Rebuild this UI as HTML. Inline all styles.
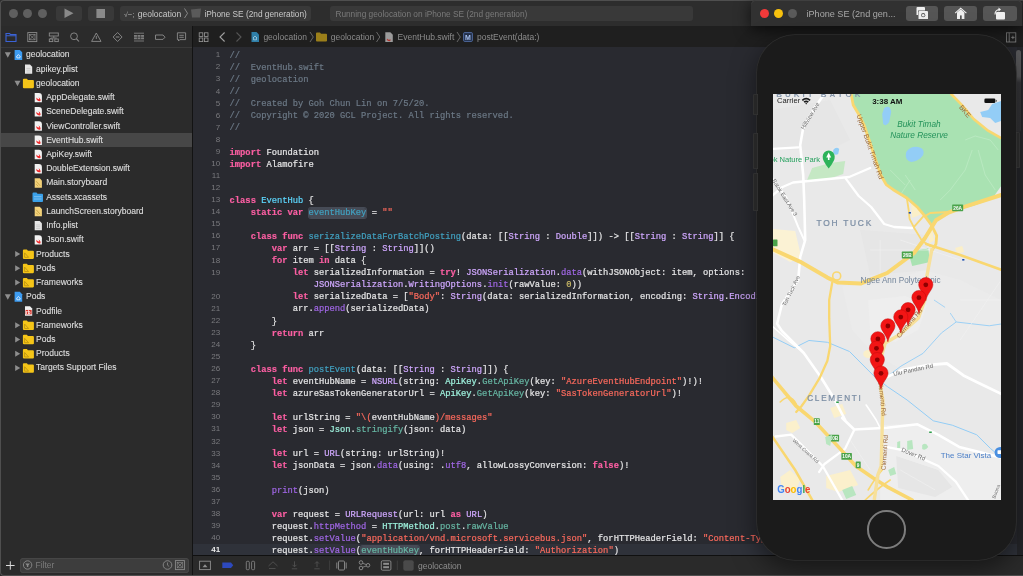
<!DOCTYPE html><html><head><meta charset="utf-8"><style>
*{box-sizing:border-box;margin:0;padding:0}
html,body{width:1023px;height:576px;overflow:hidden;background:#292a30;font-family:"Liberation Sans",sans-serif;position:relative}
.a{position:absolute}
svg{position:absolute;overflow:visible}
#toolbar{left:0;top:0;width:1023px;height:26.8px;background:#2d2d2d;border-bottom:1px solid #0b0b0b}
.tl{position:absolute;top:8.9px;width:9.2px;height:9.2px;border-radius:50%;background:#5f5f5f}
.tbtn{position:absolute;top:5.5px;height:15.5px;background:#393939;border-radius:3px}
#nav{left:0;top:26px;width:192px;height:550px;background:#2b2b2b}
#navtabs{left:0;top:26px;width:192px;height:21.5px;border-bottom:1px solid #3a3a3a}
#sep{left:192px;top:26px;width:1.5px;height:550px;background:#131313}
#jump{left:193px;top:26px;width:830px;height:21px;background:#1f1f1f}
#code{left:193px;top:47px;width:830px;height:508.5px;background:#292a30;overflow:hidden}
#debug{left:193px;top:555.2px;width:830px;height:20.8px;background:#2a2a2a;border-top:1.3px solid #101010}
.row{position:absolute;left:0;width:192px;height:14.2px;font-size:8.5px;color:#dedede;white-space:nowrap}
.row.sel{background:#474747}
.row .t{position:absolute;top:-0.4px;line-height:14.2px;-webkit-text-stroke:0.12px currentColor}
.ln{position:absolute;left:0;margin-top:-0.7px;width:27.1px;text-align:right;font-family:"Liberation Sans",sans-serif;font-size:8px;line-height:12.07px;color:#7a7a7e}
.cl{position:absolute;left:36.6px;font-family:"Liberation Mono",monospace;font-size:8.77px;line-height:12.07px;color:#e6e6e7;white-space:pre;-webkit-text-stroke:0.2px currentColor}
.c{color:#6c7986}.k{color:#fc5fa3;font-weight:bold}.s{color:#fc6a5d}.n{color:#d0bf69}
.td{color:#5dd8ff}.od{color:#41a1c0}.pt{color:#9ef1dd}.pf{color:#67b7a4}.ot{color:#d0a8ff}.of{color:#a167e6}
.hl{background:#464b56;border-radius:2px;box-shadow:0 0 0 1px #464b56}
.jt{position:absolute;top:26.8px;line-height:21px;font-size:8.5px;color:#8c8c8c;white-space:nowrap}
</style></head><body>
<div id="root" style="position:absolute;left:0;top:0;width:1023px;height:576px;overflow:hidden;will-change:transform;background:#292a30">
<div id="toolbar" class="a">
<div class="tl" style="left:9px"></div>
<div class="tl" style="left:23px"></div>
<div class="tl" style="left:37.5px"></div>
<div class="tbtn" style="left:55.5px;width:26px"></div>
<div class="tbtn" style="left:87.5px;width:26px"></div>
<div class="tbtn" style="left:119.5px;width:191.5px"></div>
<div class="tbtn" style="left:330px;width:363px"></div>
</div>
<svg style="left:0;top:0" width="1" height="1"><path d="M64.5 8.5 L73.5 13.3 L64.5 18 Z" fill="#8a8a8a"/><rect x="96.4" y="9" width="8.6" height="9" fill="#8a8a8a"/></svg>
<div class="a" style="left:124px;top:0.9px;line-height:26px;font-size:8.5px;color:#a8a8a8;white-space:nowrap"><span style="font-size:7px">√</span><span style="font-size:8px">−;</span></div>
<div class="a" style="left:137.8px;top:0.9px;line-height:26px;font-size:8.5px;color:#c9c9c9;white-space:nowrap">geolocation</div>
<svg style="left:0;top:0" width="1" height="1"><path d="M184.5 8.5 L187.5 13.3 L184.5 18" stroke="#9a9a9a" stroke-width="0.8" fill="none"/><path d="M191 9.5 L201 8.5 L200 17.5 L192 17.5 Z" fill="#5a5a5a"/></svg>
<div class="a" style="left:204.4px;top:0.9px;line-height:26px;font-size:8.3px;color:#c9c9c9;white-space:nowrap">iPhone SE (2nd generation)</div>
<div class="a" style="left:335.4px;top:0.9px;line-height:26px;font-size:8.3px;color:#7a7a7a;white-space:nowrap">Running geolocation on iPhone SE (2nd generation)</div>
<div id="nav" class="a"></div><div id="navtabs" class="a"></div><div id="sep" class="a"></div>
<svg style="left:0;top:0" width="1" height="1" fill="none" stroke-width="0.9"><path d="M6 33.5 H9.5 L10.5 34.5 H16 V41.5 H6 Z M6 35.8 H16" stroke="#3b63d6" stroke-width="1.1"/><rect x="27.8" y="32.6" width="9" height="9" stroke="#8c8c8c"/><rect x="29.6" y="34.4" width="5.4" height="5.4" stroke="#8c8c8c" stroke-width="0.7"/><path d="M29.6 34.4 L35 39.8 M35 34.4 L29.6 39.8" stroke="#8c8c8c" stroke-width="0.7"/><rect x="49.3" y="33" width="9" height="3" stroke="#8c8c8c"/><path d="M53.8 36 V38 M50.8 38 H56.8 M50.8 38 V39" stroke="#8c8c8c" stroke-width="0.8"/><rect x="49.3" y="39" width="3.5" height="2.6" stroke="#8c8c8c"/><rect x="54.8" y="39" width="3.5" height="2.6" stroke="#8c8c8c"/><circle cx="74" cy="36.3" r="3.4" stroke="#8c8c8c"/><path d="M76.5 38.8 L79 41.5" stroke="#8c8c8c" stroke-width="1.1"/><path d="M96.3 33 L101 41.4 H91.6 Z M96.3 36 V39" stroke="#8c8c8c" stroke-linejoin="round"/><path d="M117.6 32.5 L122.1 37 L117.6 41.5 L113.1 37 Z" stroke="#8c8c8c" stroke-linejoin="round"/><path d="M115.8 37 H119.4" stroke="#8c8c8c" stroke-width="1"/><path d="M134 33.2 H144 M134 41 H144" stroke="#8c8c8c" stroke-width="0.8"/><rect x="134" y="35" width="10" height="4.3" fill="#8c8c8c" stroke="none" opacity="0.85"/><path d="M134 37.2 H144 M137.4 35 V39.3 M140.6 35 V39.3" stroke="#2b2b2b" stroke-width="0.6"/><path d="M155.5 35 H163 L165 37.2 L163 39.4 H155.5 Z" stroke="#8c8c8c" stroke-linejoin="round"/><path d="M177.4 32.8 H185.6 V39.6 H179.8 L178.5 41 V39.6 H177.4 Z M179.3 35.3 H183.8 M179.3 37.3 H183.8" stroke="#8c8c8c" stroke-linejoin="round"/></svg>
<div class="row" style="top:47.78px"><span class="t" style="left:26px">geolocation</span></div>
<div class="row" style="top:62.01px"><span class="t" style="left:36.1px">apikey.plist</span></div>
<div class="row" style="top:76.25px"><span class="t" style="left:36.1px">geolocation</span></div>
<div class="row" style="top:90.48px"><span class="t" style="left:46.2px">AppDelegate.swift</span></div>
<div class="row" style="top:104.70px"><span class="t" style="left:46.2px">SceneDelegate.swift</span></div>
<div class="row" style="top:118.94px"><span class="t" style="left:46.2px">ViewController.swift</span></div>
<div class="row sel" style="top:133.16px"><span class="t" style="left:46.2px">EventHub.swift</span></div>
<div class="row" style="top:147.39px"><span class="t" style="left:46.2px">ApiKey.swift</span></div>
<div class="row" style="top:161.62px"><span class="t" style="left:46.2px">DoubleExtension.swift</span></div>
<div class="row" style="top:175.85px"><span class="t" style="left:46.2px">Main.storyboard</span></div>
<div class="row" style="top:190.09px"><span class="t" style="left:46.2px">Assets.xcassets</span></div>
<div class="row" style="top:204.31px"><span class="t" style="left:46.2px">LaunchScreen.storyboard</span></div>
<div class="row" style="top:218.54px"><span class="t" style="left:46.2px">Info.plist</span></div>
<div class="row" style="top:232.78px"><span class="t" style="left:46.2px">Json.swift</span></div>
<div class="row" style="top:247.00px"><span class="t" style="left:36.1px">Products</span></div>
<div class="row" style="top:261.24px"><span class="t" style="left:36.1px">Pods</span></div>
<div class="row" style="top:275.46px"><span class="t" style="left:36.1px">Frameworks</span></div>
<div class="row" style="top:289.69px"><span class="t" style="left:26px">Pods</span></div>
<div class="row" style="top:303.92px"><span class="t" style="left:36.1px">Podfile</span></div>
<div class="row" style="top:318.15px"><span class="t" style="left:36.1px">Frameworks</span></div>
<div class="row" style="top:332.38px"><span class="t" style="left:36.1px">Pods</span></div>
<div class="row" style="top:346.61px"><span class="t" style="left:36.1px">Products</span></div>
<div class="row" style="top:360.84px"><span class="t" style="left:36.1px">Targets Support Files</span></div>
<svg style="left:0;top:0" width="1" height="1"><path d="M4.8 52.3 H10.8 L7.8 57.8 Z" fill="#8e8e8e"/><path d="M14.6 49.9 H19.8 L22.2 52.3 V59.9 H14.6 Z" fill="#3d9cf2"/><path d="M16.4 56.699999999999996 L18.4 54.5 L20.4 56.699999999999996 M16.9 56.4 V57.9 H19.9 V56.4" stroke="#ffffff" stroke-width="0.7" fill="none"/><path d="M25 64.42999999999999 H30 L32.2 66.63 V73.83 H25 Z" fill="#e6e6e6"/><path d="M26.5 68.42999999999999 H30.5 M26.5 70.22999999999999 H30.5 M26.5 72.02999999999999 H30.5" stroke="#b0b0b0" stroke-width="0.5"/><path d="M14.5 80.76 H20.5 L17.5 86.26 Z" fill="#8e8e8e"/><path d="M22.9 79.66 Q22.9 78.66 23.9 78.66 H26.9 L27.9 79.96 H32.9 Q33.9 79.96 33.9 80.96 V87.36 Q33.9 88.16 32.9 88.16 H23.9 Q22.9 88.16 22.9 87.16 Z" fill="#f5c518"/><path d="M34.7 92.89 H38.900000000000006 Q41.900000000000006 92.89 41.900000000000006 95.89 V102.29 H34.7 Z" fill="#f2f2f2"/><path d="M36.300000000000004 97.49 Q37.900000000000006 99.49 39.300000000000004 99.09 Q38.900000000000006 97.49 38.300000000000004 96.89 Q40.300000000000004 97.89 40.5 99.49 Q40.7 100.49 40.300000000000004 101.09 Q38.1 101.69 36.5 99.49 Z" fill="#f0282a"/><path d="M34.7 107.11999999999999 H38.900000000000006 Q41.900000000000006 107.11999999999999 41.900000000000006 110.11999999999999 V116.52 H34.7 Z" fill="#f2f2f2"/><path d="M36.300000000000004 111.71999999999998 Q37.900000000000006 113.71999999999998 39.300000000000004 113.32 Q38.900000000000006 111.71999999999998 38.300000000000004 111.11999999999999 Q40.300000000000004 112.11999999999999 40.5 113.71999999999998 Q40.7 114.71999999999998 40.300000000000004 115.32 Q38.1 115.91999999999999 36.5 113.71999999999998 Z" fill="#f0282a"/><path d="M34.7 121.35000000000001 H38.900000000000006 Q41.900000000000006 121.35000000000001 41.900000000000006 124.35000000000001 V130.75 H34.7 Z" fill="#f2f2f2"/><path d="M36.300000000000004 125.95 Q37.900000000000006 127.95 39.300000000000004 127.55000000000001 Q38.900000000000006 125.95 38.300000000000004 125.35000000000001 Q40.300000000000004 126.35000000000001 40.5 127.95 Q40.7 128.95000000000002 40.300000000000004 129.55 Q38.1 130.15 36.5 127.95 Z" fill="#f0282a"/><path d="M34.7 135.58 H38.900000000000006 Q41.900000000000006 135.58 41.900000000000006 138.58 V144.98000000000002 H34.7 Z" fill="#f2f2f2"/><path d="M36.300000000000004 140.18 Q37.900000000000006 142.18 39.300000000000004 141.78 Q38.900000000000006 140.18 38.300000000000004 139.58 Q40.300000000000004 140.58 40.5 142.18 Q40.7 143.18 40.300000000000004 143.78 Q38.1 144.38000000000002 36.5 142.18 Z" fill="#f0282a"/><path d="M34.7 149.81 H38.900000000000006 Q41.900000000000006 149.81 41.900000000000006 152.81 V159.21 H34.7 Z" fill="#f2f2f2"/><path d="M36.300000000000004 154.41 Q37.900000000000006 156.41 39.300000000000004 156.01 Q38.900000000000006 154.41 38.300000000000004 153.81 Q40.300000000000004 154.81 40.5 156.41 Q40.7 157.41 40.300000000000004 158.01 Q38.1 158.61 36.5 156.41 Z" fill="#f0282a"/><path d="M34.7 164.04000000000002 H38.900000000000006 Q41.900000000000006 164.04000000000002 41.900000000000006 167.04000000000002 V173.44000000000003 H34.7 Z" fill="#f2f2f2"/><path d="M36.300000000000004 168.64000000000001 Q37.900000000000006 170.64000000000001 39.300000000000004 170.24 Q38.900000000000006 168.64000000000001 38.300000000000004 168.04000000000002 Q40.300000000000004 169.04000000000002 40.5 170.64000000000001 Q40.7 171.64000000000001 40.300000000000004 172.24 Q38.1 172.84000000000003 36.5 170.64000000000001 Z" fill="#f0282a"/><path d="M34.7 178.27 H39.7 L41.900000000000006 180.47 V187.67000000000002 H34.7 Z" fill="#f3d27a"/><path d="M36.2 181.27 L40.2 185.77 M36.2 184.27 L38.2 186.27" stroke="#b08a2a" stroke-width="0.6"/><path d="M32.5 193.50000000000003 Q32.5 192.50000000000003 33.5 192.50000000000003 H36.5 L37.5 193.80000000000004 H42.0 Q43.0 193.80000000000004 43.0 194.80000000000004 V201.20000000000002 Q43.0 202.00000000000003 42.0 202.00000000000003 H33.5 Q32.5 202.00000000000003 32.5 201.00000000000003 Z" fill="#3aa0e8"/><path d="M34 196.70 H41.5 M34 199.00 H41.5" stroke="#bfe3fb" stroke-width="0.5"/><path d="M34.7 206.73000000000002 H39.7 L41.900000000000006 208.93 V216.13000000000002 H34.7 Z" fill="#f3d27a"/><path d="M36.2 209.73000000000002 L40.2 214.23000000000002 M36.2 212.73000000000002 L38.2 214.73000000000002" stroke="#b08a2a" stroke-width="0.6"/><path d="M34.7 220.96 H39.7 L41.900000000000006 223.16 V230.36 H34.7 Z" fill="#e6e6e6"/><path d="M36.2 224.96 H40.2 M36.2 226.76000000000002 H40.2 M36.2 228.56 H40.2" stroke="#b0b0b0" stroke-width="0.5"/><path d="M34.7 235.19000000000003 H38.900000000000006 Q41.900000000000006 235.19000000000003 41.900000000000006 238.19000000000003 V244.59000000000003 H34.7 Z" fill="#f2f2f2"/><path d="M36.300000000000004 239.79000000000002 Q37.900000000000006 241.79000000000002 39.300000000000004 241.39000000000001 Q38.900000000000006 239.79000000000002 38.300000000000004 239.19000000000003 Q40.300000000000004 240.19000000000003 40.5 241.79000000000002 Q40.7 242.79000000000002 40.300000000000004 243.39000000000001 Q38.1 243.99000000000004 36.5 241.79000000000002 Z" fill="#f0282a"/><path d="M15.2 251.12 L20.2 254.12 L15.2 257.12 Z" fill="#8e8e8e"/><path d="M22.9 250.42000000000002 Q22.9 249.42000000000002 23.9 249.42000000000002 H26.9 L27.9 250.72000000000003 H32.9 Q33.9 250.72000000000003 33.9 251.72000000000003 V258.12 Q33.9 258.92 32.9 258.92 H23.9 Q22.9 258.92 22.9 257.92 Z" fill="#f5c518"/><path d="M24.6 252.92 L28.6 257.32 H24.6 Z" fill="none" stroke="#b08a10" stroke-width="0.7"/><path d="M15.2 265.35 L20.2 268.35 L15.2 271.35 Z" fill="#8e8e8e"/><path d="M22.9 264.65000000000003 Q22.9 263.65000000000003 23.9 263.65000000000003 H26.9 L27.9 264.95000000000005 H32.9 Q33.9 264.95000000000005 33.9 265.95000000000005 V272.35 Q33.9 273.15000000000003 32.9 273.15000000000003 H23.9 Q22.9 273.15000000000003 22.9 272.15000000000003 Z" fill="#f5c518"/><path d="M24.6 267.15 L28.6 271.55 H24.6 Z" fill="none" stroke="#b08a10" stroke-width="0.7"/><path d="M15.2 279.58 L20.2 282.58 L15.2 285.58 Z" fill="#8e8e8e"/><path d="M22.9 278.88 Q22.9 277.88 23.9 277.88 H26.9 L27.9 279.18 H32.9 Q33.9 279.18 33.9 280.18 V286.58 Q33.9 287.38 32.9 287.38 H23.9 Q22.9 287.38 22.9 286.38 Z" fill="#f5c518"/><path d="M24.6 281.38 L28.6 285.78 H24.6 Z" fill="none" stroke="#b08a10" stroke-width="0.7"/><path d="M4.8 294.21 H10.8 L7.8 299.71 Z" fill="#8e8e8e"/><path d="M14.6 291.81 H19.8 L22.2 294.21 V301.81 H14.6 Z" fill="#3d9cf2"/><path d="M16.4 298.61 L18.4 296.41 L20.4 298.61 M16.9 298.31 V299.81 H19.9 V298.31" stroke="#ffffff" stroke-width="0.7" fill="none"/><path d="M25 306.34 H30 L32.2 308.53999999999996 V315.73999999999995 H25 Z" fill="#f0f0f0"/><rect x="25.6" y="309.94" width="6" height="4.4" fill="#d8342a"/><text x="26" y="313.73999999999995" font-size="4.5" fill="#fff" font-family="Liberation Sans" font-weight="bold">rb</text><path d="M15.2 322.27 L20.2 325.27 L15.2 328.27 Z" fill="#8e8e8e"/><path d="M22.9 321.57 Q22.9 320.57 23.9 320.57 H26.9 L27.9 321.87 H32.9 Q33.9 321.87 33.9 322.87 V329.27 Q33.9 330.07 32.9 330.07 H23.9 Q22.9 330.07 22.9 329.07 Z" fill="#f5c518"/><path d="M24.6 324.07 L28.6 328.47 H24.6 Z" fill="none" stroke="#b08a10" stroke-width="0.7"/><path d="M15.2 336.5 L20.2 339.5 L15.2 342.5 Z" fill="#8e8e8e"/><path d="M22.9 335.8 Q22.9 334.8 23.9 334.8 H26.9 L27.9 336.1 H32.9 Q33.9 336.1 33.9 337.1 V343.5 Q33.9 344.3 32.9 344.3 H23.9 Q22.9 344.3 22.9 343.3 Z" fill="#f5c518"/><path d="M24.6 338.30 L28.6 342.70 H24.6 Z" fill="none" stroke="#b08a10" stroke-width="0.7"/><path d="M15.2 350.72999999999996 L20.2 353.72999999999996 L15.2 356.72999999999996 Z" fill="#8e8e8e"/><path d="M22.9 350.03 Q22.9 349.03 23.9 349.03 H26.9 L27.9 350.33 H32.9 Q33.9 350.33 33.9 351.33 V357.72999999999996 Q33.9 358.53 32.9 358.53 H23.9 Q22.9 358.53 22.9 357.53 Z" fill="#f5c518"/><path d="M24.6 352.53 L28.6 356.93 H24.6 Z" fill="none" stroke="#b08a10" stroke-width="0.7"/><path d="M15.2 364.96 L20.2 367.96 L15.2 370.96 Z" fill="#8e8e8e"/><path d="M22.9 364.26 Q22.9 363.26 23.9 363.26 H26.9 L27.9 364.56 H32.9 Q33.9 364.56 33.9 365.56 V371.96 Q33.9 372.76 32.9 372.76 H23.9 Q22.9 372.76 22.9 371.76 Z" fill="#f5c518"/><path d="M24.6 366.76 L28.6 371.16 H24.6 Z" fill="none" stroke="#b08a10" stroke-width="0.7"/></svg>
<div class="a" style="left:20px;top:557.6px;width:168.7px;height:15px;background:#3d3d3d;border-radius:3.5px;box-shadow:inset 0 0 0 0.7px #4a4a4a"></div>
<div class="a" style="left:35.5px;top:557.6px;line-height:15px;font-size:8.5px;color:#7c7c7c">Filter</div>
<svg style="left:0;top:0" width="1" height="1" fill="none"><path d="M6 565.5 H14.6 M10.3 561.3 V569.7" stroke="#dcdcdc" stroke-width="1"/><circle cx="27.6" cy="565" r="4.2" stroke="#8a8a8a" stroke-width="0.9"/><path d="M25.3 563.6 H29.9 L28.3 565.6 V567 H26.9 V565.6 Z" fill="#8a8a8a"/><circle cx="167.5" cy="565" r="4.3" stroke="#8a8a8a" stroke-width="0.9"/><path d="M167.5 562.5 V565.2 L169.2 566.5" stroke="#8a8a8a" stroke-width="0.8"/><rect x="175.4" y="560.6" width="9" height="9" stroke="#8a8a8a" stroke-width="0.9"/><path d="M177.2 562.4 L182.6 567.8 M182.6 562.4 L177.2 567.8" stroke="#8a8a8a" stroke-width="0.7"/><rect x="177.2" y="562.4" width="5.4" height="5.4" stroke="#8a8a8a" stroke-width="0.6"/></svg>
<div id="jump" class="a"></div>
<svg style="left:0;top:0" width="1" height="1" fill="none"><rect x="199.2" y="32.8" width="3.6" height="3.6" stroke="#9a9a9a" stroke-width="0.8"/><rect x="204.4" y="32.8" width="3.6" height="3.6" stroke="#9a9a9a" stroke-width="0.8"/><rect x="199.2" y="38" width="3.6" height="3.6" stroke="#9a9a9a" stroke-width="0.8"/><rect x="204.4" y="38" width="3.6" height="3.6" stroke="#9a9a9a" stroke-width="0.8"/><path d="M224.6 32.5 L220 37 L224.6 41.5" stroke="#a0a0a0" stroke-width="1.1"/><path d="M236.5 32.5 L241 37 L236.5 41.5" stroke="#555" stroke-width="1.1"/><path d="M251.5 32 H256.5 L259 34.5 V42 H251.5 Z" fill="#2f7fa8"/><path d="M253 38 L255 36 L257 38 M253.5 37.7 V39.8 H256.5 V37.7" stroke="#c9e3ef" stroke-width="0.6"/><path d="M310 32 L313.3 37 L310 42" stroke="#7a7a7a" stroke-width="0.8"/><path d="M316 33.5 Q316 32.5 317 32.5 H320 L321 33.8 H326 Q327 33.8 327 34.8 V40.7 Q327 41.5 326 41.5 H317 Q316 41.5 316 40.5 Z" fill="#9b7f1a"/><path d="M376.5 32 L379.8 37 L376.5 42" stroke="#7a7a7a" stroke-width="0.8"/><path d="M385.3 32.3 H390.3 L392.8 34.8 V42 H385.3 Z" fill="#9a9a9a"/><path d="M387 38.5 Q388.5 40.5 390.5 39.3 Q390.6 40.6 390.2 41 Q388 41.5 386.8 40 Z" fill="#b0332d"/><path d="M457 32 L460.3 37 L457 42" stroke="#7a7a7a" stroke-width="0.8"/><rect x="463.6" y="32.6" width="8.8" height="8.8" rx="1" fill="#23304a" stroke="#5a7ab8" stroke-width="0.8"/><text x="465" y="40" font-size="7" font-family="Liberation Sans" font-weight="bold" fill="#a8c0ee">M</text></svg>
<div class="jt" style="left:263.4px">geolocation</div>
<div class="jt" style="left:330.8px">geolocation</div>
<div class="jt" style="left:397.6px">EventHub.swift</div>
<div class="jt" style="left:477px">postEvent(data:)</div>
<svg style="left:0;top:0" width="1" height="1" fill="none"><rect x="1006.6" y="32.8" width="9.2" height="9.2" stroke="#8a8a8a" stroke-width="0.8"/><path d="M1009.2 32.8 V42 M1011.2 37.4 H1014.6 M1012.9 35.7 V39.1" stroke="#8a8a8a" stroke-width="0.8"/></svg>
<div id="code" class="a">
<div class="a" style="left:0;top:497.37px;width:830px;height:12.57px;background:#2f323a"></div>
<div class="ln" style="top:3.00px;">1</div>
<div class="cl" style="top:3.00px"><span class="c">//</span></div>
<div class="ln" style="top:15.07px;">2</div>
<div class="cl" style="top:15.07px"><span class="c">//  EventHub.swift</span></div>
<div class="ln" style="top:27.14px;">3</div>
<div class="cl" style="top:27.14px"><span class="c">//  geolocation</span></div>
<div class="ln" style="top:39.21px;">4</div>
<div class="cl" style="top:39.21px"><span class="c">//</span></div>
<div class="ln" style="top:51.28px;">5</div>
<div class="cl" style="top:51.28px"><span class="c">//  Created by Goh Chun Lin on 7/5/20.</span></div>
<div class="ln" style="top:63.35px;">6</div>
<div class="cl" style="top:63.35px"><span class="c">//  Copyright © 2020 GCL Project. All rights reserved.</span></div>
<div class="ln" style="top:75.42px;">7</div>
<div class="cl" style="top:75.42px"><span class="c">//</span></div>
<div class="ln" style="top:87.49px;">8</div>
<div class="ln" style="top:99.56px;">9</div>
<div class="cl" style="top:99.56px"><span class="k">import</span> Foundation</div>
<div class="ln" style="top:111.63px;">10</div>
<div class="cl" style="top:111.63px"><span class="k">import</span> Alamofire</div>
<div class="ln" style="top:123.70px;">11</div>
<div class="ln" style="top:135.77px;">12</div>
<div class="ln" style="top:147.84px;">13</div>
<div class="cl" style="top:147.84px"><span class="k">class</span> <span class="td">EventHub</span> {</div>
<div class="ln" style="top:159.91px;">14</div>
<div class="cl" style="top:159.91px">    <span class="k">static</span> <span class="k">var</span> <span class="od hl">eventHubKey</span> = <span class="s">""</span></div>
<div class="ln" style="top:171.98px;">15</div>
<div class="ln" style="top:184.05px;">16</div>
<div class="cl" style="top:184.05px">    <span class="k">class</span> <span class="k">func</span> <span class="od">serizalizeDataForBatchPosting</span>(data: [[<span class="ot">String</span> : <span class="ot">Double</span>]]) -&gt; [[<span class="ot">String</span> : <span class="ot">String</span>]] {</div>
<div class="ln" style="top:196.12px;">17</div>
<div class="cl" style="top:196.12px">        <span class="k">var</span> arr = [[<span class="ot">String</span> : <span class="ot">String</span>]]()</div>
<div class="ln" style="top:208.19px;">18</div>
<div class="cl" style="top:208.19px">        <span class="k">for</span> item <span class="k">in</span> data {</div>
<div class="ln" style="top:220.26px;">19</div>
<div class="cl" style="top:220.26px">            <span class="k">let</span> serializedInformation = <span class="k">try</span>! <span class="ot">JSONSerialization</span>.<span class="of">data</span>(withJSONObject: item, options:</div>
<div class="cl" style="top:232.33px">                <span class="ot">JSONSerialization</span>.<span class="ot">WritingOptions</span>.<span class="of">init</span>(rawValue: <span class="n">0</span>))</div>
<div class="ln" style="top:244.40px;">20</div>
<div class="cl" style="top:244.40px">            <span class="k">let</span> serializedData = [<span class="s">"Body"</span>: <span class="ot">String</span>(data: serializedInformation, encoding: <span class="ot">String</span>.<span class="ot">Encoding</span>.<span class="of">utf8</span>)!]</div>
<div class="ln" style="top:256.47px;">21</div>
<div class="cl" style="top:256.47px">            arr.<span class="of">append</span>(serializedData)</div>
<div class="ln" style="top:268.54px;">22</div>
<div class="cl" style="top:268.54px">        }</div>
<div class="ln" style="top:280.61px;">23</div>
<div class="cl" style="top:280.61px">        <span class="k">return</span> arr</div>
<div class="ln" style="top:292.68px;">24</div>
<div class="cl" style="top:292.68px">    }</div>
<div class="ln" style="top:304.75px;">25</div>
<div class="ln" style="top:316.82px;">26</div>
<div class="cl" style="top:316.82px">    <span class="k">class</span> <span class="k">func</span> <span class="od">postEvent</span>(data: [[<span class="ot">String</span> : <span class="ot">String</span>]]) {</div>
<div class="ln" style="top:328.89px;">27</div>
<div class="cl" style="top:328.89px">        <span class="k">let</span> eventHubName = <span class="ot">NSURL</span>(string: <span class="pt">ApiKey</span>.<span class="pf">GetApiKey</span>(key: <span class="s">"AzureEventHubEndpoint"</span>)!)!</div>
<div class="ln" style="top:340.96px;">28</div>
<div class="cl" style="top:340.96px">        <span class="k">let</span> azureSasTokenGeneratorUrl = <span class="pt">ApiKey</span>.<span class="pf">GetApiKey</span>(key: <span class="s">"SasTokenGeneratorUrl"</span>)!</div>
<div class="ln" style="top:353.03px;">29</div>
<div class="ln" style="top:365.10px;">30</div>
<div class="cl" style="top:365.10px">        <span class="k">let</span> urlString = <span class="s">"\(</span>eventHubName<span class="s">)/messages"</span></div>
<div class="ln" style="top:377.17px;">31</div>
<div class="cl" style="top:377.17px">        <span class="k">let</span> json = <span class="pt">Json</span>.<span class="pf">stringify</span>(json: data)</div>
<div class="ln" style="top:389.24px;">32</div>
<div class="ln" style="top:401.31px;">33</div>
<div class="cl" style="top:401.31px">        <span class="k">let</span> url = <span class="ot">URL</span>(string: urlString)!</div>
<div class="ln" style="top:413.38px;">34</div>
<div class="cl" style="top:413.38px">        <span class="k">let</span> jsonData = json.<span class="of">data</span>(using: .<span class="of">utf8</span>, allowLossyConversion: <span class="k">false</span>)!</div>
<div class="ln" style="top:425.45px;">35</div>
<div class="ln" style="top:437.52px;">36</div>
<div class="cl" style="top:437.52px">        <span class="of">print</span>(json)</div>
<div class="ln" style="top:449.59px;">37</div>
<div class="ln" style="top:461.66px;">38</div>
<div class="cl" style="top:461.66px">        <span class="k">var</span> request = <span class="ot">URLRequest</span>(url: url <span class="k">as</span> <span class="ot">URL</span>)</div>
<div class="ln" style="top:473.73px;">39</div>
<div class="cl" style="top:473.73px">        request.<span class="of">httpMethod</span> = <span class="pt">HTTPMethod</span>.<span class="pf">post</span>.<span class="pf">rawValue</span></div>
<div class="ln" style="top:485.80px;">40</div>
<div class="cl" style="top:485.80px">        request.<span class="of">setValue</span>(<span class="s">"application/vnd.microsoft.servicebus.json"</span>, forHTTPHeaderField: <span class="s">"Content-Type"</span>)</div>
<div class="ln" style="top:497.87px;color:#ececec;font-weight:bold">41</div>
<div class="cl" style="top:497.87px">        request.<span class="of">setValue</span>(<span class="pf hl">eventHubKey</span>, forHTTPHeaderField: <span class="s">"Authorization"</span>)</div>
</div>
<div id="debug" class="a"></div>
<svg style="left:0;top:0" width="1" height="1" fill="none"><rect x="199.6" y="561.2" width="10.8" height="8.4" stroke="#8e8e8e" stroke-width="0.9"/><path d="M202.5 567.3 L205 564.3 L207.5 567.3 Z" fill="#8e8e8e"/><path d="M222.3 562.4 H231 L233.2 565.2 L231 568 H222.3 Z" fill="#2d49bd"/><rect x="246.3" y="561.3" width="3" height="8.4" rx="1" stroke="#8e8e8e" stroke-width="0.8"/><rect x="251.6" y="561.3" width="3" height="8.4" rx="1" stroke="#8e8e8e" stroke-width="0.8"/><path d="M268.5 566 L273 561.8 L277.5 566 M269 568.5 H275.5" stroke="#555" stroke-width="0.8"/><path d="M294.5 561.3 V566.5 M292.5 564.8 L294.5 566.8 L296.5 564.8 M291.8 568.8 H297.2" stroke="#555" stroke-width="0.8"/><path d="M317 567 V561.8 M315 563.6 L317 561.6 L319 563.6 M314.3 568.8 H319.7" stroke="#555" stroke-width="0.8"/><path d="M329.6 560.5 V570" stroke="#444" stroke-width="0.8"/><rect x="338.5" y="561" width="6" height="9" rx="1" stroke="#8e8e8e" stroke-width="0.9"/><path d="M336.8 562.5 V568.5 M346.2 562.5 V568.5" stroke="#8e8e8e" stroke-width="0.9"/><circle cx="361" cy="562.5" r="1.8" stroke="#8e8e8e" stroke-width="0.9"/><circle cx="361" cy="568" r="1.8" stroke="#8e8e8e" stroke-width="0.9"/><circle cx="368" cy="565.3" r="1.8" stroke="#8e8e8e" stroke-width="0.9"/><path d="M362.7 563.3 L366.3 564.6 M362.7 567.2 L366.3 566" stroke="#8e8e8e" stroke-width="0.8"/><rect x="381.3" y="560.8" width="9.6" height="9.4" rx="1.2" stroke="#8e8e8e" stroke-width="0.9"/><rect x="383.2" y="562.8" width="5.8" height="2" fill="#8e8e8e"/><rect x="383.2" y="566.2" width="5.8" height="2" fill="#8e8e8e"/><path d="M397.3 560.5 V570" stroke="#444" stroke-width="0.8"/><rect x="403.3" y="560.3" width="10.4" height="10.4" rx="2" fill="#4a4a4a"/></svg>
<div class="a" style="left:418px;top:556.8px;line-height:19.5px;font-size:8.5px;color:#8e8e8e">geolocation</div>
<div class="a" style="left:0;top:0;width:1023px;height:576px;border:1px solid #4f4f4f;border-right:none;border-radius:4px 0 0 4px;pointer-events:none"></div>
<div class="a" style="left:751px;top:0;width:271px;height:26px;background:#313131;border-radius:5px 5px 0 0;box-shadow:inset 0 1px 0 #3f3f3f,0 3px 16px rgba(0,0,0,0.7)"></div>
<div class="a" style="left:759.9px;top:9px;width:9px;height:9px;border-radius:50%;background:#f23a3a"></div>
<div class="a" style="left:773.9px;top:9px;width:9px;height:9px;border-radius:50%;background:#f7c10e"></div>
<div class="a" style="left:788.3px;top:9px;width:9px;height:9px;border-radius:50%;background:#5a5a5a"></div>
<div class="a" style="left:806.5px;top:0.8px;line-height:26px;font-size:9.1px;color:#a9a9a9;white-space:nowrap">iPhone SE (2nd gen...</div>
<div class="a" style="left:906px;top:5.6px;width:32px;height:15.4px;background:#565656;border-radius:3px"></div>
<div class="a" style="left:943.5px;top:5.6px;width:33.7px;height:15.4px;background:#565656;border-radius:3px"></div>
<div class="a" style="left:983.2px;top:5.6px;width:34px;height:15.4px;background:#565656;border-radius:3px"></div>
<svg style="left:0;top:0" width="1" height="1"><path d="M916.5 8 Q916.5 7 917.5 7 H924 Q925 7 925 8 V10.5 H918 V15 H916.5 Z" fill="#f0f0f0"/><path d="M918.5 12 Q918.5 11 919.5 11 H927 Q928 11 928 12 V19 H918.5 Z" fill="#f0f0f0"/><circle cx="923.2" cy="15.2" r="2.1" fill="#565656"/><circle cx="923.2" cy="15.2" r="1.3" fill="#f0f0f0"/><path d="M955.2 13.2 L960.7 8.2 L966.4 13.2" stroke="#f0f0f0" stroke-width="1.1" fill="none"/><path d="M957 12.5 L960.7 9.3 L964.4 12.5 V19 H957 Z" fill="#f0f0f0"/><rect x="960" y="15.4" width="1.7" height="3.6" fill="#565656"/><rect x="996" y="12" width="9" height="7.5" rx="1" fill="#f0f0f0"/><path d="M995 14.5 Q995 10 999.5 9.5" stroke="#f0f0f0" stroke-width="1.1" fill="none"/><path d="M998.5 7.5 L1001 9.6 L998.5 11.6 Z" fill="#f0f0f0"/></svg>
<div class="a" style="left:1016.5px;top:47px;width:6.5px;height:508px;background:#25262a"></div>
<div class="a" style="left:1016.4px;top:50px;width:4.8px;height:82px;background:linear-gradient(#5a5a5c 0,#5a5a5c 32%,#37373a 40%,#333336 100%);border-radius:2.5px"></div>
<div class="a" style="left:757.4px;top:34.6px;width:258.3px;height:525.7px;background:#1b1b1b;border-radius:38px;box-shadow:0 0 0 0.8px #2e2e2e,0 8px 26px rgba(0,0,0,0.5)"></div>
<div class="a" style="left:752.8px;top:93.9px;width:5px;height:20.8px;background:#262626;border-radius:1.5px 0 0 1.5px;box-shadow:inset 0 0 0 0.6px #383838"></div>
<div class="a" style="left:752.8px;top:132.8px;width:5px;height:36.1px;background:#262626;border-radius:1.5px 0 0 1.5px;box-shadow:inset 0 0 0 0.6px #383838"></div>
<div class="a" style="left:752.8px;top:173px;width:5px;height:37.5px;background:#262626;border-radius:1.5px 0 0 1.5px;box-shadow:inset 0 0 0 0.6px #383838"></div>
<div class="a" style="left:1015.8px;top:132px;width:4px;height:36px;background:#262626;border-radius:0 1.5px 1.5px 0;box-shadow:inset 0 0 0 0.6px #383838"></div>
<div class="a" style="left:867.3px;top:510.2px;width:38.6px;height:38.6px;border-radius:50%;border:2px solid #7d7d7d"></div>
<div class="a" style="left:772.8px;top:94px;width:228.2px;height:405.6px;background:#e8e8e8;overflow:hidden">
<svg style="left:0;top:0" width="228.2" height="405.6" viewBox="772.8 94 228.2 405.6" font-family="Liberation Sans"><rect x="772.8" y="94" width="228.2" height="405.6" fill="#e9e9e9"/><path d="M880 425 L917 424 L938 435 L959 447 L1001 457 L1001 500 L880 500 Z" fill="#eeeeee"/><path d="M842 286 L880 284 L924 270 L960 280 L1001 300 L1001 392 L962 376 L946 364 L902 370 L872 352 L852 330 Z" fill="#ebebeb"/><path d="M868 300 L905 296 L927 305 L918 330 L895 342 L870 335 Z" fill="#eeeeee"/><path d="M896 456 L938 470 L952 487 L935 497 L898 488 Z" fill="#e6e6e6"/><path d="M860 230 L925 235 L930 270 L870 275 Z" fill="#e4e4e4" opacity="0.7"/><path d="M772 110 L830 100 L850 140 L830 150 L772 150 Z" fill="#e5e5e5" opacity="0.6"/><path d="M772 229 L795 231 L801 257 L790 262 L772 252 Z" fill="#fbf2d4"/><path d="M780 477 L790 470 L800 480 L795 492 L782 490 Z" fill="#fbf0cc"/><path d="M826 476 L850 470 L858 485 L838 492 L826 488 Z" fill="#fbf0cc"/><path d="M830 408 L842 404 L846 414 L834 418 Z" fill="#fbf0cc"/><ellipse cx="868" cy="354" rx="5" ry="4" fill="#fbefc8"/><path d="M786 423 L796 420 L800 428 L792 433 L786 430 Z" fill="#fbf0cc"/><path d="M955 248 L962 246 L964 252 L957 254 Z" fill="#fbefc8"/><path d="M910.8 203.6 L918 208 L922 214 L912 218 Z M928 231 L932 230 L934 240 L929 244 Z" fill="#fbefc8"/><path d="M1001 101 L992 104 L988 110 L980 112 L982 117 L990 118 L995 123 L1001 121 Z" fill="#93cdf6"/><path d="M851 94 L951 94 L962.3 105.7 L973.5 119 L987 130 L1001 138 L1001 186 L994.6 195 L989 200 L974 205.4 L960 209.5 L948 212.5 L938 219 L932 228 L927 218 L918 208 L906 199 L893 189.7 L886 184.5 L880.6 175 L875 158.4 L869.5 141.8 L864 125.3 L858.5 114.2 L853 105 Z" fill="#a9e2b2"/><path d="M908 252 L928 248 L930 262 L912 266 Z" fill="#a9e2b2"/><path d="M806 182 L812 168 L830 163 L845 161 L843 174 L825 180 Z" fill="#c5e8c4"/><path d="M965 140 L975 136 L990 140 L998 150 M972 150 L965 170 L950 190 L940 200 M978 150 L985 175 L995 190 M890 170 L905 185 M905 175 L915 190 M910 180 L900 195" stroke="#c8efcf" stroke-width="0.5" fill="none"/><path d="M884 108 Q890 104 891 112 L889 122 Q886 127 883 124 L882 114 Z" fill="#93cdf6"/><path d="M906 152 Q910 146 918 147 Q925 148 923 155 Q919 161 911 162 Q904 160 906 152 Z" fill="#93cdf6"/><path d="M833 150 Q836 146 839 149 L838 154 Q835 156 833 153 Z" fill="#93cdf6"/><path d="M772 336.8 L794.1 347.8 L808.8 340.5 L827.2 342.3 L849.3 351.5 L875 377.3 L887 386.5 L906.9 400 L933 420.8 L952.1 425.2 L976.5 434.8 L990.5 448.7 L1001 457.4" stroke="#93cdf6" stroke-width="1" fill="none"/><path d="M1001 324 L989 325.8 L956 322 L941.2 333 L922.8 353.4 L900.7 366.2 L886 377.3 L880 386" stroke="#93cdf6" stroke-width="0.9" fill="none"/><path d="M933.8 300 L944.9 307.4 M956 322 L950 313" stroke="#93cdf6" stroke-width="0.8" fill="none"/><g stroke="#ffffff" fill="none" stroke-linecap="round" stroke-linejoin="round"><path d="M824 94 L813 110 L803 128 L800 145 L803 175 L804 200 L805 240 L800 257 L798 280 L790 292 L781.7 304.3 L776.9 323.8 L781.7 331 L803.6 353 L820.7 377.2 L832.8 396.7 L845 420 L842 418 L854 429.5 L887 427.8 L917.3 424.3 L938.2 434.8 L959 447 L1001 457.4" stroke-width="2.6"/><path d="M772 149 L798 147.4 M772 195.6 L782.4 187 L792.8 182.5 L849 177 L870 168 M845.6 178.6 L858.5 196 L871 207 L884 224 L894 227 L912 228" stroke-width="2.3"/><path d="M884 378.3 L901.7 370 L928.75 364.8 L946.7 363.5 L963.3 375.4 L978 382.8 L1001 393.8" stroke-width="2.8"/><path d="M775.5 436.5 L791 434.7 L822.5 466 L842 500 M886 447 L903.4 450.4 L938.2 466 L955.6 481.7 L967.8 500 M854 430 L845 448.6 L824 464.3 L819 472" stroke-width="2.3"/><path d="M866 405 L876 420 L880 428 M772 326 L790 342 L803.6 353" stroke-width="1.6"/><path d="M772 178 L786 197.3 L798 226.8 L804 240" stroke-width="2"/></g><path d="M880 240 L880 275 M900 240 L960 260 M870 250 L930 250 M960 300 L1001 300 M1001 280 L960 340 M900 470 L935 490 M850 440 L870 470" stroke="#f2f2f2" stroke-width="0.6" fill="none"/><g stroke="#f9d770" fill="none" stroke-linecap="round" stroke-linejoin="round"><path d="M851 94 L853 105 L858.5 114.2 L864 125.3 L869.5 141.8 L875 158.4 L880.6 175 L886 184.5 L893 189.7 L906.7 198 L917.8 207.8 L924.7 216.1 L931.7 225.8 L936.5 235.6 L935.8 243.9 L932 250" stroke-width="2.8"/><path d="M951 94 L962.3 105.7 L973.5 119 L987 130 L1001 138" stroke-width="2.6"/><path d="M772 249 L799.6 261.6 L827.2 277.6 L838 282.6 L860.3 283.6 L887 273 L913.6 253.2 L924.7 238.3 L935.8 220.3 L948.3 212.6 L963.3 207.2 L1001 195" stroke-width="4"/><path d="M926 243.9 L960 255 L1001 269.8" stroke-width="2.6"/><path d="M906.7 198.5 L908.5 210 L909.4 218.9 L913.6 227.2 L922 241.1 L930 246 M913.6 227.2 L923.3 216.1 M924.7 216.1 L930 213 L948 212" stroke-width="1.8"/><circle cx="836.5" cy="276" r="4" stroke-width="1.6"/><path d="M832 282.6 L829 300 L829 318.4 L830 346 L827.2 360.7 L819.8 377.3 L808.8 395.7 L801.4 406 L796 412" stroke-width="2.3"/><path d="M772 377.3 L795.9 406 L813.9 420.8 L838.2 446.9 L855.6 466 L873 478.1 L887 486.8 L912 500" stroke-width="3.6"/><path d="M772 436.5 L794.6 469.5 L812 500" stroke-width="2.5"/><path d="M868 490 Q875 478 882 470 M865 500 Q878 488 890 480 M780 402 Q790 392 796 404" stroke-width="1.6"/></g><path d="M932 247.7 L926.5 277 L924.6 300 L918.3 318 L899.6 334.6 L885 343 L880.8 357.5 L880.8 390 L882.7 400 L881 466 L877.6 475 L874.1 500" stroke="#f7e09a" stroke-width="3.4" fill="none" stroke-linejoin="round"/><rect x="952" y="204.4" width="11" height="6.8" rx="0.6" fill="#4aa34a"/><text x="957.5" y="209.6" font-size="4.8" fill="#fff" text-anchor="middle" font-weight="bold">26A</text><rect x="901.6" y="251.6" width="11" height="6.8" rx="0.6" fill="#4aa34a"/><text x="907.1" y="256.8" font-size="4.8" fill="#fff" text-anchor="middle" font-weight="bold">26B</text><rect x="772.8" y="239.5" width="4.5" height="6.8" rx="0.6" fill="#4aa34a"/><text x="775.05" y="244.7" font-size="4.8" fill="#fff" text-anchor="middle" font-weight="bold"></text><rect x="813.6" y="418.3" width="6" height="6.8" rx="0.6" fill="#4aa34a"/><text x="816.6" y="423.5" font-size="4.8" fill="#fff" text-anchor="middle" font-weight="bold">11</text><rect x="828.5" y="434.8" width="10.4" height="6.8" rx="0.6" fill="#4aa34a"/><text x="833.7" y="440.0" font-size="4.8" fill="#fff" text-anchor="middle" font-weight="bold">10B</text><rect x="841.2" y="453" width="10.5" height="6.8" rx="0.6" fill="#4aa34a"/><text x="846.45" y="458.2" font-size="4.8" fill="#fff" text-anchor="middle" font-weight="bold">10A</text><rect x="855.5" y="461.5" width="5" height="6.8" rx="0.6" fill="#4aa34a"/><text x="858.0" y="466.7" font-size="4.8" fill="#fff" text-anchor="middle" font-weight="bold">9</text><rect x="836" y="401.5" width="2.6" height="1.5" fill="#2e9e4a"/><rect x="929" y="431.5" width="2.6" height="1.5" fill="#2e9e4a"/><rect x="908.5" y="212" width="2.2" height="1.6" fill="#1d4fb0"/><rect x="962" y="259" width="2.2" height="1.6" fill="#1d4fb0"/><path d="M897 442 L900 441 L900 448 L897 448 Z M907 441 L912 440 L913 449 L907 450 Z M922 445 Q926 442 928 447 Q925 451 922 449 Z M888 470 L894 467 L896 474 L890 476 Z" fill="#b8e6c0"/><path d="M825 437 L832 435 L830 446 L826 444 Z M842 490 L852 486 L856 495 L846 499 Z" fill="#b8e6c0"/><text x="776" y="97.5" font-size="8" fill="#8797ab" letter-spacing="3" font-weight="bold">BUKIT BATOK</text><text x="819.8" y="162" font-size="7.6" fill="#26a15e" text-anchor="end">Batok Nature Park</text><g transform="translate(0,2.5)"><path d="M828.5 166 Q822 158 822.5 154 A6 6 0 0 1 834.5 154 Q835 158 828.5 166 Z" fill="#2db35a"/><path d="M828.5 150 L831 155 H829.3 V157.5 H827.7 V155 H826 Z" fill="#fff"/></g><text font-size="7" fill="#9c6a3c" transform="translate(858.6,114.5) rotate(70.5)" y="2.4">Upper Bukit Timah Rd</text><text x="897" y="127.5" font-size="8.25" fill="#23925a" font-style="italic">Bukit Timah</text><text x="890" y="138" font-size="8.25" fill="#23925a" font-style="italic">Nature Reserve</text><text font-size="7" fill="#9c6a3c" transform="translate(960.5,106) rotate(50)" y="2.4">BKE</text><text x="816.3" y="226" font-size="8.4" fill="#7d8fa5" stroke="#7d8fa5" stroke-width="0.25" letter-spacing="1.75">TOH TUCK</text><text x="860.3" y="283" font-size="8.2" fill="#72849a">Ngee Ann Polytechnic</text><text x="807" y="401.5" font-size="8.2" fill="#7d8fa5" stroke="#7d8fa5" stroke-width="0.25" letter-spacing="1.75">CLEMENTI</text><text x="940.5" y="458.2" font-size="8" fill="#4b7fc7">The Star Vista</text><circle cx="1000" cy="452.5" r="5.6" fill="#4a8fe0"/><rect x="997.3" y="450.3" width="5" height="3.6" rx="0.6" fill="#fff"/><text font-size="6" fill="#6a6a6a" transform="translate(893.5,376) rotate(-12)">Ulu Pandan Rd</text><text font-size="6" fill="#6a6a6a" transform="translate(901.5,449.5) rotate(22)" y="2">Dover Rd</text><text font-size="5" fill="#707070" transform="translate(792,441) rotate(42)">West Coast Rd</text><text font-size="6.4" fill="#9c6a3c" transform="translate(880.2,381) rotate(84)" y="2.2">Clementi Rd</text><text font-size="6.4" fill="#9c6a3c" transform="translate(883.2,470) rotate(-86)" y="2.2">Clementi Rd</text><text font-size="6.6" fill="#9c6a3c" transform="translate(897.5,337) rotate(-50)" y="2.2">Clementi Rd</text><text font-size="5.8" fill="#6a6a6a" transform="translate(802,129) rotate(-59)" y="2">Hillview Ave</text><text font-size="5.6" fill="#6a6a6a" transform="translate(783.5,305.5) rotate(-63.5)" y="2">Toh Tuck Ave</text><text font-size="5.6" fill="#6a6a6a" transform="translate(773.5,179.5) rotate(58)" y="2">Batok East Ave 3</text><text font-size="5" fill="#707070" transform="translate(995,499) rotate(-70)">Buona</text><text x="777" y="493.5" font-size="10.5" font-weight="bold" transform="translate(777,0) scale(0.92,1) translate(-777,0)"><tspan fill="#4285f4">G</tspan><tspan fill="#ea4335">o</tspan><tspan fill="#fbbc05">o</tspan><tspan fill="#4285f4">g</tspan><tspan fill="#34a853">l</tspan><tspan fill="#ea4335">e</tspan></text><path d="M925.6 300.6 C924.4 293.6 918.5 289.6 918.5 284.6 A7.1 7.1 0 0 1 932.7 284.6 C932.7 289.6 926.8000000000001 293.6 925.6 300.6 Z" fill="#f21515" stroke="#c40a0a" stroke-width="0.5"/><circle cx="925.6" cy="284.8" r="2.4" fill="#8e0000"/><path d="M918.75 313.5 C917.55 306.5 911.65 302.5 911.65 297.5 A7.1 7.1 0 0 1 925.85 297.5 C925.85 302.5 919.95 306.5 918.75 313.5 Z" fill="#f21515" stroke="#c40a0a" stroke-width="0.5"/><circle cx="918.75" cy="297.7" r="2.4" fill="#8e0000"/><path d="M907.9 325.6 C906.6999999999999 318.6 900.8 314.6 900.8 309.6 A7.1 7.1 0 0 1 915.0 309.6 C915.0 314.6 909.1 318.6 907.9 325.6 Z" fill="#f21515" stroke="#c40a0a" stroke-width="0.5"/><circle cx="907.9" cy="309.8" r="2.4" fill="#8e0000"/><path d="M900.6 332.9 C899.4 325.9 893.5 321.9 893.5 316.9 A7.1 7.1 0 0 1 907.7 316.9 C907.7 321.9 901.8000000000001 325.9 900.6 332.9 Z" fill="#f21515" stroke="#c40a0a" stroke-width="0.5"/><circle cx="900.6" cy="317.09999999999997" r="2.4" fill="#8e0000"/><path d="M887.7 341.8 C886.5 334.8 880.6 330.8 880.6 325.8 A7.1 7.1 0 0 1 894.8000000000001 325.8 C894.8000000000001 330.8 888.9000000000001 334.8 887.7 341.8 Z" fill="#f21515" stroke="#c40a0a" stroke-width="0.5"/><circle cx="887.7" cy="326.0" r="2.4" fill="#8e0000"/><path d="M877.7 354.75 C876.5 347.75 870.6 343.75 870.6 338.75 A7.1 7.1 0 0 1 884.8000000000001 338.75 C884.8000000000001 343.75 878.9000000000001 347.75 877.7 354.75 Z" fill="#f21515" stroke="#c40a0a" stroke-width="0.5"/><circle cx="877.7" cy="338.95" r="2.4" fill="#8e0000"/><path d="M876.25 364.1 C875.05 357.1 869.15 353.1 869.15 348.1 A7.1 7.1 0 0 1 883.35 348.1 C883.35 353.1 877.45 357.1 876.25 364.1 Z" fill="#f21515" stroke="#c40a0a" stroke-width="0.5"/><circle cx="876.25" cy="348.3" r="2.4" fill="#8e0000"/><path d="M877.1 375.6 C875.9 368.6 870.0 364.6 870.0 359.6 A7.1 7.1 0 0 1 884.2 359.6 C884.2 364.6 878.3000000000001 368.6 877.1 375.6 Z" fill="#f21515" stroke="#c40a0a" stroke-width="0.5"/><circle cx="877.1" cy="359.8" r="2.4" fill="#8e0000"/><path d="M880.8 389.1 C879.5999999999999 382.1 873.6999999999999 378.1 873.6999999999999 373.1 A7.1 7.1 0 0 1 887.9 373.1 C887.9 378.1 882.0 382.1 880.8 389.1 Z" fill="#f21515" stroke="#c40a0a" stroke-width="0.5"/><circle cx="880.8" cy="373.3" r="2.4" fill="#8e0000"/><text x="776.9" y="103.5" font-size="7.6" fill="#222">Carrier</text><path d="M801.5 99.8 Q806 95.8 810.5 99.8 L809.3 101 Q806 98.2 802.7 101 Z M803.3 101.6 Q806 99.4 808.7 101.6 L807.5 102.8 Q806 101.6 804.5 102.8 Z M805 103.4 Q806 102.6 807 103.4 L806 104.4 Z" fill="#1a1a1a"/><text x="872" y="103.6" font-size="8" fill="#111" font-weight="bold">3:38 AM</text><rect x="984.2" y="98.6" width="11" height="4.4" rx="1.3" fill="#111"/><rect x="995.7" y="99.9" width="0.9" height="1.8" fill="#555"/></svg>
</div>
</div></body></html>
